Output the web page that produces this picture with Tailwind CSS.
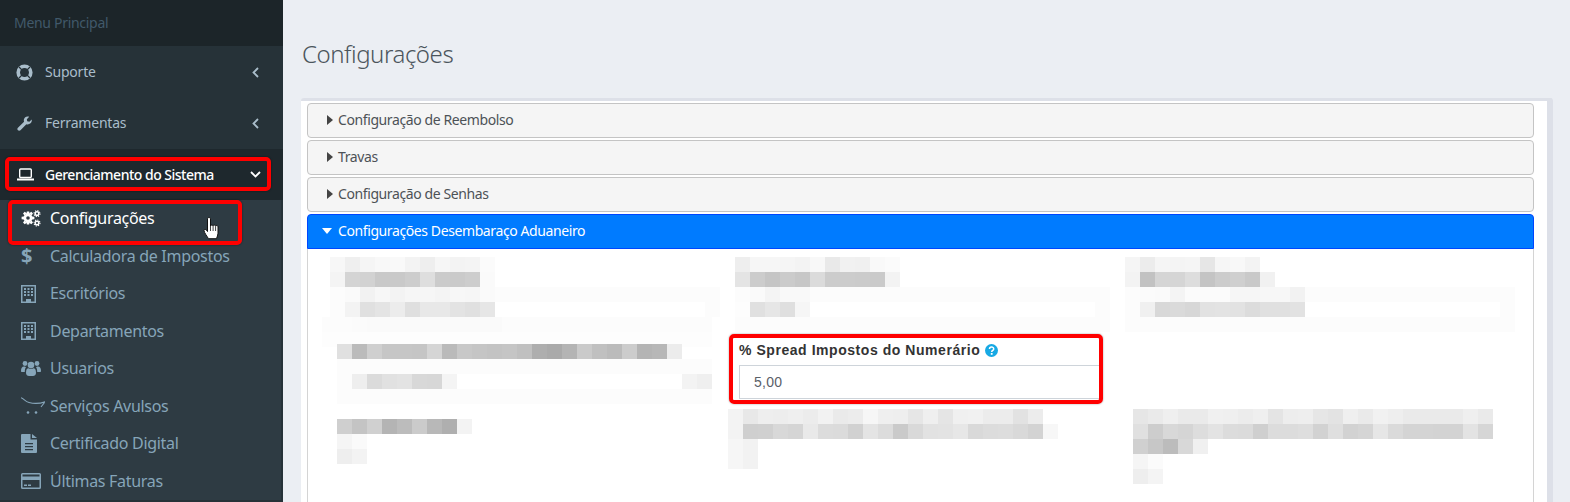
<!DOCTYPE html>
<html lang="pt-BR">
<head>
    <meta charset="utf-8">
    <title>Configurações</title>
    <script src="https://cdn.jsdelivr.net/npm/@tailwindcss/browser@4"></script>
</head>
<body class="font-['Noto_Sans',sans-serif] overflow-hidden">
<div class="flex h-[502px] w-[1570px] overflow-hidden bg-[#ebeef3]">

    <!-- sidebar -->
    <aside class="w-[283px] shrink-0 bg-[#263238] flex flex-col">
        <div class="h-[46px] shrink-0 bg-[#1c2529] pl-[14px] pb-[2px] flex items-center text-[14px] tracking-[-0.3px] text-[#41596a]">Menu Principal</div>

        <a class="h-[52px] shrink-0 flex items-center pl-[16px] pr-[24px] text-[14px] tracking-[-0.2px] text-[#a9bdca]">
            <svg class="w-[17px] h-[17px] mr-[12px]" viewBox="0 0 17 17" fill="none"><circle cx="8.500" cy="8.500" r="6.300" stroke="currentColor" stroke-width="3.600"/><path d="M3 3l3 3M14 3l-3 3M3 14l3-3M14 14l-3-3" stroke="#263238" stroke-width="1.200"/></svg>
            <span class="flex-1 pb-[2px]">Suporte</span>
            <svg class="w-[7px] h-[11px]" viewBox="0 0 7 11" fill="none" stroke="currentColor" stroke-width="1.800"><path d="M6 1L1.500 5.500 6 10"/></svg>
        </a>
        <a class="h-[51px] shrink-0 flex items-center pl-[17px] pr-[24px] text-[14px] tracking-[-0.2px] text-[#a9bdca]">
            <svg class="w-[15px] h-[15px] mr-[13px]" viewBox="0 0 16 16" fill="currentColor"><path d="M15.700 3.600l-2.500 2.500-2.300-.4-.4-2.300L13 .9c-1.500-.7-3.300-.4-4.500.8-1.200 1.200-1.500 2.800-1 4.300L1 12.500c-.8.8-.8 2 0 2.700s1.900.7 2.700 0L10 8.800c1.500.5 3.200.1 4.400-1 1.200-1.200 1.600-2.900 1.300-4.200z"/></svg>
            <span class="flex-1 pb-[2px]">Ferramentas</span>
            <svg class="w-[7px] h-[11px]" viewBox="0 0 7 11" fill="none" stroke="currentColor" stroke-width="1.800"><path d="M6 1L1.500 5.500 6 10"/></svg>
        </a>
        <a class="relative h-[51px] shrink-0 flex items-center pl-[17px] pr-[22px] bg-[#1e282d] text-[14px] font-medium tracking-[-0.5px] text-white">
            <svg class="w-[17px] h-[13px] mr-[11px]" viewBox="0 0 17 13" fill="none" stroke="currentColor"><rect x="2.700" y="1" width="11.600" height="8.500" rx="1" stroke-width="1.400"/><path d="M0 11.500h17" stroke-width="2"/></svg>
            <span class="flex-1">Gerenciamento do Sistema</span>
            <svg class="w-[11px] h-[7px]" viewBox="0 0 11 7" fill="none" stroke="currentColor" stroke-width="1.800"><path d="M1 1l4.500 4.500L10 1"/></svg>
            <div class="absolute left-[5px] top-[8px] w-[266px] h-[34px] border-[4px] border-[#f00] rounded-[5px] shadow-[0_0_2px_#0008]"></div>
        </a>

        <nav class="w-[281px] h-[300px] shrink-0 bg-[#2e3b43] flex flex-col text-[16px] tracking-[-0.3px] text-[#86a5b9]">
            <a class="relative h-[37.5px] flex items-center pl-[21px] text-white">
                <svg class="w-[20px] h-[17px] mr-[9px]" viewBox="0 0 20 17" fill="currentColor"><path d="M7 3.500a4.500 4.500 0 1 0 0 9 4.500 4.500 0 0 0 0-9zm0 2.700a1.800 1.800 0 1 1 0 3.600 1.800 1.800 0 0 1 0-3.600z"/><path d="M5.800 1.500h2.400l.4 2.500h-3.200zM5.800 14.500h2.400l.4-2.500h-3.200zM.6 6.800v2.400l2.500.4V6.400zM13.400 6.800v2.400l-2.500.4V6.400zM2 3.500l1.700-1.700 2 1.500-2.200 2.200zM12 12.500l-1.700 1.700-2-1.500 2.200-2.200zM2 12.500l1.700 1.700 2-1.500-2.200-2.200zM12 3.500l-1.700-1.700-2 1.500 2.200 2.200z"/><g fill="none" stroke="currentColor"><circle cx="16" cy="3.600" r="1.800" stroke-width="1.500"/><circle cx="16" cy="3.600" r="3" stroke-width="1.100" stroke-dasharray="1.200 1.150"/><circle cx="16" cy="13" r="1.800" stroke-width="1.500"/><circle cx="16" cy="13" r="3" stroke-width="1.100" stroke-dasharray="1.200 1.150"/></g></svg>
                <span class="pb-[2px]">Configurações</span>
                <div class="absolute left-[8px] top-[0px] w-[234px] h-[45px] border-[4px] border-[#f00] rounded-[5px] shadow-[0_0_2px_#0008]"></div>
                <svg class="absolute left-[203px] top-[17px] w-[17px] h-[24px]" viewBox="0 0 17 24"><path d="M4.500 2c0-2 3-2 3 0v7c0-1.300 2.600-1.300 2.600 0 0-1.200 2.500-1.200 2.500.2 0-1 2.400-1 2.400.5v6.500c0 2-1 3.500-1.500 5.500H5.500C4.500 20 1 15.500 1 13.500c0-1.500 2-1.700 3.500 1z" fill="#fff" stroke="#111" stroke-width="1"/><path d="M7.500 9v5M10.100 9v5M12.600 9.500V14" stroke="#111" stroke-width=".8"/></svg>
            </a>
            <a class="h-[37.5px] flex items-center pl-[21px]">
                <span class="w-[29px] text-[20px] font-bold">$</span>Calculadora de Impostos
            </a>
            <a class="h-[37.5px] flex items-center pl-[21px]">
                <svg class="w-[15px] h-[18px] mr-[14px]" viewBox="0 0 15 18" fill="currentColor"><path fill-rule="evenodd" d="M0 0h15v18H0zM1.500 1.500v15h3.500v-2.500h5v2.500h3.500v-15zM3 3h2v2H3zM6.500 3h2v2h-2zM10 3h2v2h-2zM3 6h2v2H3zM6.500 6h2v2h-2zM10 6h2v2h-2zM3 9h2v2H3zM6.500 9h2v2h-2zM10 9h2v2h-2z"/></svg><span class="pb-[2px]">Escritórios</span>
            </a>
            <a class="h-[37.5px] flex items-center pl-[21px]">
                <svg class="w-[15px] h-[18px] mr-[14px]" viewBox="0 0 15 18" fill="currentColor"><path fill-rule="evenodd" d="M0 0h15v18H0zM1.500 1.500v15h3.500v-2.500h5v2.500h3.500v-15zM3 3h2v2H3zM6.500 3h2v2h-2zM10 3h2v2h-2zM3 6h2v2H3zM6.500 6h2v2h-2zM10 6h2v2h-2zM3 9h2v2H3zM6.500 9h2v2h-2zM10 9h2v2h-2z"/></svg><span>Departamentos</span>
            </a>
            <a class="h-[37.5px] flex items-center pl-[21px]">
                <svg class="w-[20px] h-[18px] mr-[9px]" viewBox="0 0 20 18" fill="currentColor"><circle cx="4" cy="3.500" r="2.400"/><circle cx="16" cy="3.500" r="2.400"/><circle cx="10" cy="5" r="3.300"/><path d="M0 11c0-3 1-4.500 3-4.500 1 0 1.500.3 2 .7-.8 1-1.200 2.300-1.200 4.800H1c-.6 0-1-.4-1-1zM20 11c0-3-1-4.500-3-4.500-1 0-1.500.3-2 .7.800 1 1.200 2.300 1.200 4.800H19c.6 0 1-.4 1-1zM5 13c0-3.500 1-4.800 2.500-4.800 1 .8 4 .8 5 0 1.500 0 2.500 1.300 2.500 4.800 0 2-1.500 3-3 3H8c-1.500 0-3-1-3-3z"/></svg><span class="pb-[2px]">Usuarios</span>
            </a>
            <a class="h-[37.5px] flex items-center pl-[21px]">
                <svg class="w-[24px] h-[18px] mr-[5px]" viewBox="0 0 24 18" fill="none" stroke="currentColor"><path d="M0 .7C3 1.500 4 4.500 8 5.500c4 1 11 1 16-.7L20 10" stroke-width="1.100"/><circle cx="7" cy="15.500" r="1.300" fill="currentColor" stroke="none"/><circle cx="15" cy="15.500" r="1.300" fill="currentColor" stroke="none"/></svg><span>Serviços Avulsos</span>
            </a>
            <a class="h-[37.5px] flex items-center pl-[21px]">
                <svg class="w-[16px] h-[19px] mr-[13px]" viewBox="0 0 16 19" fill="currentColor"><path fill-rule="evenodd" d="M1 0h8.500v5.500H16V18a1 1 0 0 1-1 1H1a1 1 0 0 1-1-1V1a1 1 0 0 1 1-1zM4 9v1.300h8V9zM4 12v1.300h8V12zM4 15v1.300h8V15z"/><path d="M11 0l5 4h-5z"/></svg><span class="pb-[2px]">Certificado Digital</span>
            </a>
            <a class="h-[37.5px] flex items-center pl-[21px]">
                <svg class="w-[20px] h-[16px] mr-[9px]" viewBox="0 0 20 16" fill="currentColor"><path fill-rule="evenodd" d="M1.500 0h17A1.500 1.500 0 0 1 20 1.500v13a1.500 1.500 0 0 1-1.500 1.500h-17A1.500 1.500 0 0 1 0 14.500v-13A1.500 1.500 0 0 1 1.500 0zM1.500 1.500V3.500h17V1.500zM1.500 7v7.500h17V7zM3 11.500h3V13H3zM7 11.500h3V13H7z"/></svg><span>Últimas Faturas</span>
            </a>
        </nav>
    </aside>

    <!-- content -->
    <main class="flex-1 min-w-0 pl-[18px] pr-[17px]">
        <h1 class="h-[98px] pl-[1px] pt-[37px] text-[24px] leading-[34px] tracking-[-0.45px] font-light text-[#4c555c]">Configurações</h1>

        <div class="h-[404px] bg-white border-t-[3px] border-r-[6px] border-[#dde0e8] rounded-t-[3px] pl-[6px] pr-[13px] pt-[2px]">
            <div class="flex flex-col gap-[2px] text-[14px] tracking-[-0.4px] text-[#4d5257]">
                <div class="h-[35px] flex items-center pl-[19px] pb-[2px] bg-[#f5f5f5] border border-[#c4c4c4] rounded-[4px]">
                    <span class="w-0 h-0 border-y-[5px] border-y-transparent border-l-[6px] border-l-[#444] mr-[5px]"></span>Configuração de Reembolso
                </div>
                <div class="h-[35px] flex items-center pl-[19px] pb-[2px] bg-[#f5f5f5] border border-[#c4c4c4] rounded-[4px]">
                    <span class="w-0 h-0 border-y-[5px] border-y-transparent border-l-[6px] border-l-[#444] mr-[5px]"></span>Travas
                </div>
                <div class="h-[35px] flex items-center pl-[19px] pb-[2px] bg-[#f5f5f5] border border-[#c4c4c4] rounded-[4px]">
                    <span class="w-0 h-0 border-y-[5px] border-y-transparent border-l-[6px] border-l-[#444] mr-[5px]"></span>Configuração de Senhas
                </div>
                <div class="h-[35px] flex items-center pl-[14px] pb-[2px] bg-[#007bff] border border-[#0046ff] rounded-t-[4px] text-white">
                    <span class="w-0 h-0 border-x-[5px] border-x-transparent border-t-[6px] border-t-white mr-[6px]"></span>Configurações Desembaraço Aduaneiro
                </div>
            </div>

            <div class="h-[300px] border-x border-[#d4d4d4] pl-[14px] pt-[8px] grid grid-cols-[406px_397px_1fr] items-start">
                <div>
                    <div class="ml-[8px]" data-cells="f7 ef f5 f8 f9 f3 ee f6 f3 f4 fb|f4 d4 d2 c9 c9 cd de cb ca cd fa|fc fa f2 f7 f3 f6 f6 f4 f7 f6 fa fc*15|fc f3 e0 e4 ec df e8 e8 e3 e0 e6 ff*14 fc"></div>
                    <div data-cells="fc fc fb fa fa fa fa fa fa fa fa fa fc*14|fd*26"></div>
                    <div class="ml-[15px] mt-[-3px]" data-cells="e0 bb cf c6 c6 c5 d5 ba c8 c5 c3 c5 c0 ae aa b4 ca c0 bb cc b4 b7 ec|fc*25|fc ee db e1 e3 d8 d7 f4 ff*15 f3 ef|fc*25"></div>
                    <div class="ml-[15px] mt-[15px]" data-cells="cf c4 d0 b4 bc cb b8 af f3|f5 fa|ee f3"></div>
                </div>
                <div>
                    <div class="ml-[7px]" data-cells="ee f6 f6 f5 f3 f8 e9 f1 f0 f9 fb|e4 cc c5 cb c7 db cc cc cb ca f3|fc fa f4 f9 f9 fc*20|fd e0 e6 df f6 ff*19 fc|fc*25"></div>
                    <div class="ml-[1px] mt-[2px] w-[374px] h-[70px] border-[4px] border-[#f00] rounded-[5px] pl-[6px] shadow-[0_0_2px_#0006]">
                        <label class="h-[27px] pb-[2px] flex items-center font-['Liberation_Sans',sans-serif] text-[14px] font-bold tracking-[0.55px] text-[#333]">% Spread Impostos do Numerário
                            <svg class="w-[13px] h-[13px] ml-[5px]" viewBox="0 0 13 13"><circle cx="6.500" cy="6.500" r="6.500" fill="#17a9e4"/><path d="M4.500 5c0-2.600 4.200-2.600 4.200-.1 0 1.600-2 1.500-2 3" fill="none" stroke="#fff" stroke-width="1.500"/><rect x="5.800" y="9" width="1.800" height="1.800" fill="#fff"/></svg>
                        </label>
                        <input class="block w-full h-[34px] pl-[14px] border border-r-0 border-[#ced4da] font-['Liberation_Sans',sans-serif] text-[14px] tracking-[0.3px] text-[#5a6068] outline-none" value="5,00">
                    </div>
                    <div class="mt-[5px]" data-cells="f3 e8 ee ed ef ec f2 ea ec f6 ef ee e6 ef e5 f0 f1 ec ec e2 ec|f3 cf d0 d8 d5 e9 dc db d1 e4 dc ca d9 e2 e3 e7 d9 dc dd d9 d3 f7|f6 f2|f6 f2"></div>
                </div>
                <div>
                    <div data-cells="f5 ec f5 f4 f5 e6 f6 f8 f3|f3 c2 d5 d5 dd c4 cc cf c9 f1|fc fb fa f4 fb fb fb f6 f6 f7 f7 f2 fc*14|fc f0 d8 da d7 e2 e3 e2 dc e0 e0 e2 ff*13 fc|fc*26"></div>
                    <div class="ml-[8px] mt-[77px]" data-cells="e6 ea ef ea ea f0 ef ec ef e4 ed ee e6 e3 ef ea f1 ee ea ea ea ea ef ea|e0 cd d8 d5 dd e3 dc db cf dc dc de d2 df d2 d5 e6 da d4 d4 d3 d3 e3 d6|d0 c7 bc d8 f0|f5 fb|ee f4"></div>
                </div>
            </div>
        </div>
    </main>
</div>

<script>
    // blurred fields: each data-cells holds rows of 15px gray blocks, "fc*3" repeats a value
    document.querySelectorAll('[data-cells]').forEach(el => {
        el.dataset.cells.split('|').forEach(row => {
            const line = document.createElement('div');
            line.style.display = 'flex';
            line.style.height = '15px';
            row.split(' ').forEach(cell => {
                const [gray, count] = cell.split('*');
                for (let i = 0; i < (count || 1); i++) {
                    const block = document.createElement('div');
                    block.style.width = '15px';
                    block.style.background = `#${gray}${gray}${gray}`;
                    line.appendChild(block);
                }
            });
            el.appendChild(line);
        });
    });
</script>
</body>
</html>
